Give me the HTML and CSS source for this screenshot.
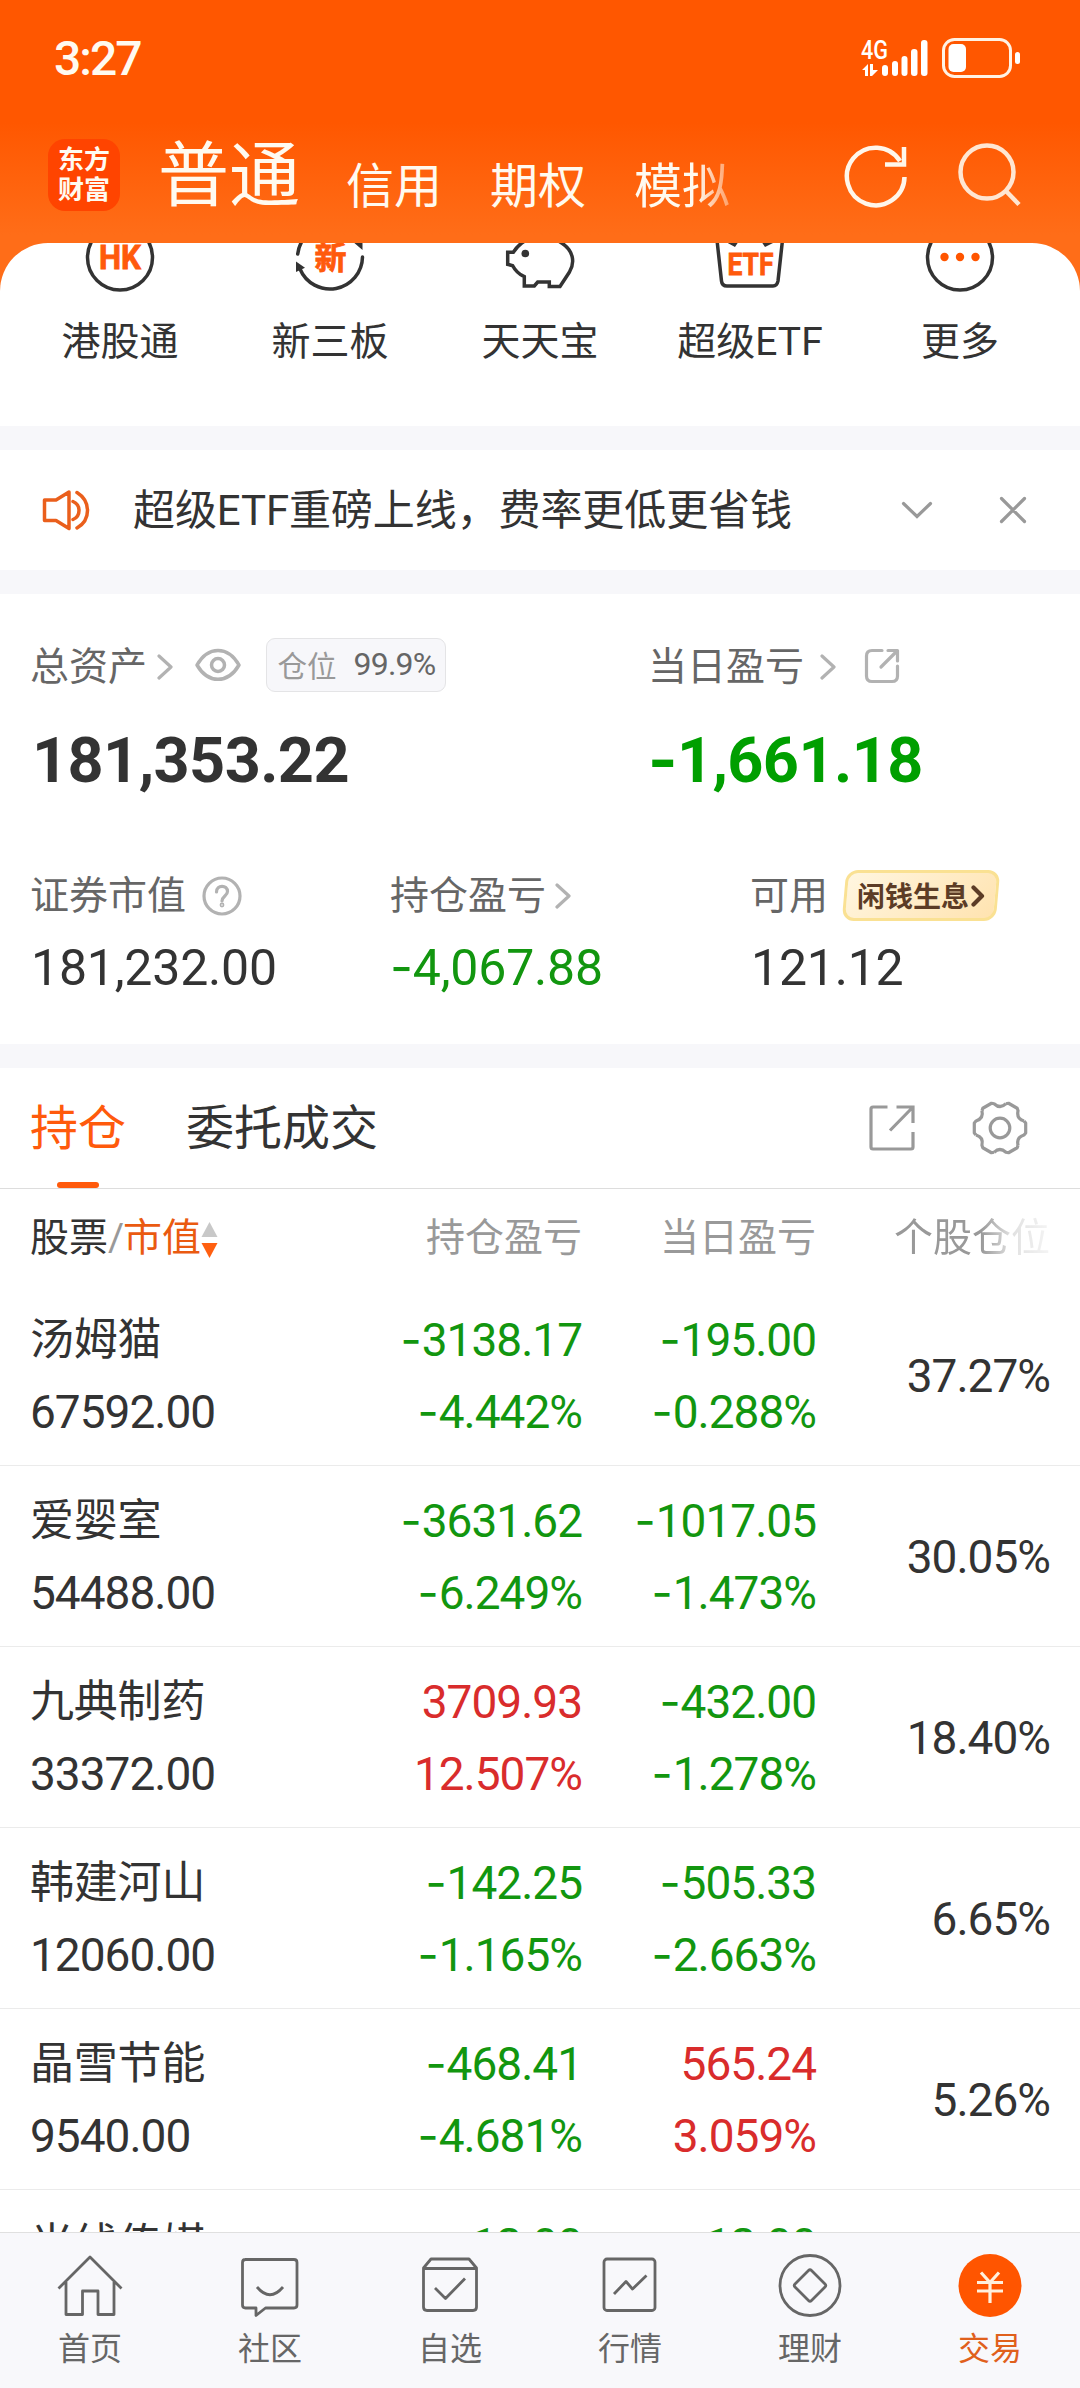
FILE: index.html
```html
<!DOCTYPE html>
<html lang="zh-CN">
<head>
<meta charset="utf-8">
<title>交易</title>
<link rel="stylesheet" href="styles.css">
</head>
<body>
<div class="app">
  <header class="header">
    <div class="status">
      <span class="clock">3:27</span>
      <svg class="status-icons" width="160" height="44" viewBox="862 35 160 44" fill="#fff">
        <text class="net" x="862" y="57.500" textLength="27" lengthAdjust="spacingAndGlyphs">4G</text>
        <path d="M863 69 L869 63 V75 H866 V69Z M871 63 H874 V69 H879 L873 75 H871Z"/>
        <rect x="883" y="64" width="6" height="11" rx="3"/><rect x="893" y="60" width="6" height="15" rx="3"/>
        <rect x="902.500" y="55" width="6" height="20" rx="3"/><rect x="912" y="48" width="6.500" height="27" rx="3"/>
        <rect x="922" y="39" width="6.500" height="36" rx="3"/>
        <rect x="944.500" y="38.500" width="67" height="37" rx="11" fill="none" stroke="#fff2e4" stroke-width="3"/>
        <rect x="949.500" y="43" width="17.500" height="28" rx="5"/><rect x="1016" y="51" width="5" height="12" rx="2.500"/>
      </svg>
    </div>
    <div class="topbar">
      <div class="logo"><span>东方</span><span>财富</span></div>
      <nav class="accounts">
        <span class="account account-on">普通</span><span class="account">信用</span><span class="account">期权</span><span class="account account-fade">模拟</span>
      </nav>
      <svg class="top-icons" width="180" height="72" viewBox="843 139 180 72" fill="none" stroke-width="4.500">
        <path stroke="#fff6ea" d="M904.500 177 A28.800 28.800 0 1 1 900 161"/>
        <path stroke="#fff6ea" d="M904 147 V164.500 H885"/>
        <g stroke="#ffe6d2"><circle cx="987" cy="172" r="26.500"/><path d="M1005.500 190.500 L1019 204.500"/></g>
      </svg>
    </div>
  </header>

  <section class="shortcuts-wrap">
    <div class="shortcuts">
      <div class="shortcut">
        <svg width="70" height="70" viewBox="0 0 70 70"><circle class="ink" cx="35" cy="34.500" r="32.500"/><text class="ico-text" x="35" y="46" font-size="33" textLength="42" lengthAdjust="spacingAndGlyphs">HK</text></svg>
        <span>港股通</span>
      </div>
      <div class="shortcut">
        <svg width="70" height="70" viewBox="0 0 70 70"><path class="ink" d="M2.700 31 A32.500 32.500 0 0 1 60 14 M67.500 34 A32.500 32.500 0 0 1 5 46"/><path fill="#333" d="M1 38.500 L10 44.700 L1 49Z M67.500 12 V27 L57 18Z"/><text class="ico-text" x="35.500" y="45.500" font-size="32">新</text></svg>
        <span>新三板</span>
      </div>
      <div class="shortcut">
        <svg width="70" height="70" viewBox="0 0 70 70"><path class="ink pig" d="M16.700 20 Q12 23.500 8.300 29.300 H2.700 V41.300 L7.700 42.700 Q11.500 50 19.300 53.700 V63 H29.300 L32.700 59 H44.300 V63.500 H55 L64.300 49.300 C70 40 69 28 56.700 20 C45 12 28 12 16.700 20Z"/><circle cx="20.300" cy="30.500" r="3.800" fill="#333"/></svg>
        <span>天天宝</span>
      </div>
      <div class="shortcut">
        <svg width="70" height="70" viewBox="0 0 70 70"><path class="ink" d="M1 8 L6.500 58 Q7 63 12 63 H58 Q62 63 63 58 L68.500 8"/><path fill="#333" d="M9 18 H24 L20 24Z M46 18 H62 L50 24Z"/><text class="ico-text" x="35.500" y="52" font-size="32" textLength="46" lengthAdjust="spacingAndGlyphs">ETF</text></svg>
        <span>超级ETF</span>
      </div>
      <div class="shortcut">
        <svg width="70" height="70" viewBox="0 0 70 70"><circle class="ink" cx="35" cy="34.500" r="32.500"/><g fill="#ff5500"><circle cx="19.500" cy="34" r="4.200"/><circle cx="35" cy="34" r="4.200"/><circle cx="50.500" cy="34" r="4.200"/></g></svg>
        <span>更多</span>
      </div>
    </div>
  </section>

  <section class="notice">
    <svg width="48" height="44" viewBox="42 488 48 44" fill="none" stroke="#ea5f1c" stroke-width="3.500" stroke-linecap="round" stroke-linejoin="round"><path d="M69 492 L56 500 H44.500 V520.500 H56 L69 528.500Z M73 501.500 Q79 504 79 510.500 Q79 517 73 519.500 M77 492.500 Q87.500 499 87.500 510.500 Q87.500 522 77 528"/></svg>
    <p class="notice-text">超级ETF重磅上线，费率更低更省钱</p>
    <svg width="126" height="30" viewBox="902 495 126 30" fill="none" stroke="#999" stroke-width="3.200" stroke-linecap="round"><path d="M904.500 503.500 L918 516.500 L931.500 503.500 M1002.500 498.500 L1025.500 521.500 M1025.500 498.500 L1002.500 521.500"/></svg>
  </section>

  <section class="assets">
    <div class="asset asset-total">
      <div class="label"><span>总资产</span>
        <svg class="arrow" width="16" height="28" viewBox="0 0 16 28"><path d="M2 3 L14 14 L2 25"/></svg>
        <svg class="eye" width="46" height="34" viewBox="0 0 46 34"><path d="M2 17 C13 -2.500 33 -2.500 44 17 C33 36 13 36 2 17Z"/><circle cx="23" cy="17" r="6.500"/></svg>
        <span class="ratio"><i>仓位</i><b>99.9%</b></span>
      </div>
      <div class="big">181,353.22</div>
    </div>
    <div class="asset asset-today">
      <div class="label"><span>当日盈亏</span>
        <svg class="arrow arrow-wide" width="16" height="28" viewBox="0 0 16 28"><path d="M2 3 L14 14 L2 25"/></svg>
        <svg class="share" width="36" height="36" viewBox="0 0 36 36"><path d="M18 2.500 H8 Q2.500 2.500 2.500 8 V28 Q2.500 33.500 8 33.500 H28 Q33.500 33.500 33.500 28 V18 M24 2.500 H33.500 V13 M33 3 L17 19"/></svg>
      </div>
      <div class="big down"><span class="sign">-</span>1,661.18</div>
    </div>
    <div class="asset">
      <div class="label"><span>证券市值</span>
        <svg class="help" width="40" height="40" viewBox="0 0 40 40"><circle cx="20" cy="20" r="18"/><path d="M14.500 16 C14.500 8.500 25.500 8.500 25.500 15.500 C25.500 20 20 20 20 25"/><circle cx="20" cy="29" r="0.800"/></svg>
      </div>
      <div class="value">181,232.00</div>
    </div>
    <div class="asset">
      <div class="label"><span>持仓盈亏</span>
        <svg class="arrow arrow-near" width="16" height="28" viewBox="0 0 16 28"><path d="M2 3 L14 14 L2 25"/></svg>
      </div>
      <div class="value down"><span class="sign">-</span>4,067.88</div>
    </div>
    <div class="asset">
      <div class="label"><span>可用</span>
        <span class="promo"><em>闲钱生息</em><svg width="14" height="22" viewBox="0 0 14 22"><path d="M2.500 2.500 L11 11 L2.500 19.500"/></svg></span>
      </div>
      <div class="value">121.12</div>
    </div>
  </section>

  <section class="holdings">
    <div class="tabs">
      <span class="tab tab-on">持仓</span><span class="tab">委托成交</span>
      <svg class="tab-icons" width="160" height="56" viewBox="870 1100 160 56" fill="none" stroke="#999" stroke-width="3.200">
        <path d="M889.500 1107 H875 Q873 1107 873 1109 V1147 Q873 1149 875 1149 H913 Q915 1149 915 1147 V1132 M898.500 1107 H915 V1123 M915 1107 L892 1130.500"/>
        <g transform="translate(1002 1128)"><circle r="9.800"/>
          <g id="gear" stroke-linejoin="round"><path id="tooth" d="M24 -7 L25.700 -5 V5 L24 7 Q16 9.500 18.100 17.300"/><use href="#tooth" transform="rotate(60)"/><use href="#tooth" transform="rotate(120)"/><use href="#tooth" transform="rotate(180)"/><use href="#tooth" transform="rotate(240)"/><use href="#tooth" transform="rotate(300)"/></g>
        </g>
      </svg>
    </div>
    <div class="row head">
      <div class="sort">股票<i>/</i><b>市值</b><svg width="17" height="36" viewBox="0 0 17 36"><path fill="#c8c8c8" d="M8.500 0 L16.500 15 H0.500Z"/><path fill="#ff5f10" d="M8.500 36 L16.500 21 H0.500Z"/></svg></div>
      <div>持仓盈亏</div><div>当日盈亏</div><div class="head-fade">个股仓位</div>
    </div>
    <div class="row">
      <div class="stock"><span>汤姆猫</span><span>67592.00</span></div>
      <div class="down"><span><span class="sign">-</span>3138.17</span><span><span class="sign">-</span>4.442%</span></div>
      <div class="down"><span><span class="sign">-</span>195.00</span><span><span class="sign">-</span>0.288%</span></div>
      <div>37.27%</div>
    </div>
    <div class="row">
      <div class="stock"><span>爱婴室</span><span>54488.00</span></div>
      <div class="down"><span><span class="sign">-</span>3631.62</span><span><span class="sign">-</span>6.249%</span></div>
      <div class="down"><span><span class="sign">-</span>1017.05</span><span><span class="sign">-</span>1.473%</span></div>
      <div>30.05%</div>
    </div>
    <div class="row">
      <div class="stock"><span>九典制药</span><span>33372.00</span></div>
      <div class="up"><span>3709.93</span><span>12.507%</span></div>
      <div class="down"><span><span class="sign">-</span>432.00</span><span><span class="sign">-</span>1.278%</span></div>
      <div>18.40%</div>
    </div>
    <div class="row">
      <div class="stock"><span>韩建河山</span><span>12060.00</span></div>
      <div class="down"><span><span class="sign">-</span>142.25</span><span><span class="sign">-</span>1.165%</span></div>
      <div class="down"><span><span class="sign">-</span>505.33</span><span><span class="sign">-</span>2.663%</span></div>
      <div>6.65%</div>
    </div>
    <div class="row">
      <div class="stock"><span>晶雪节能</span><span>9540.00</span></div>
      <div class="down"><span><span class="sign">-</span>468.41</span><span><span class="sign">-</span>4.681%</span></div>
      <div class="up"><span>565.24</span><span>3.059%</span></div>
      <div>5.26%</div>
    </div>
    <div class="row">
      <div class="stock"><span>光线传媒</span></div>
      <div class="down"><span><span class="sign">-</span>12.00</span></div>
      <div class="down"><span><span class="sign">-</span>12.00</span></div>
      <div></div>
    </div>
  </section>

  <nav class="tabbar">
    <div class="nav-item"><svg width="68" height="68" viewBox="0 0 68 68"><path d="M2.500 34.500 L34 3 L65.500 34.500 M10 28 V60.500 H26.500 V37 H42 V60.500 H58 V28"/></svg><span>首页</span></div>
    <div class="nav-item"><svg width="68" height="68" viewBox="0 0 68 68"><path d="M9 5.500 H58 Q61 5.500 61 8.500 V51 Q61 54 58 54 H29.500 L20 61.500 V54 H9.500 Q6.500 54 6.500 51 V8.500 Q6.500 5.500 9.500 5.500 M21 33 Q34 48.500 47 33"/></svg><span>社区</span></div>
    <div class="nav-item"><svg width="68" height="68" viewBox="0 0 68 68"><path d="M7.500 14 L15 5 H53 L60.500 14 V53 Q60.500 56.500 57 56.500 H11 Q7.500 56.500 7.500 53Z M7.500 14.500 H60.500 M19 34 L29.500 44.500 L49 24.500"/></svg><span>自选</span></div>
    <div class="nav-item"><svg width="68" height="68" viewBox="0 0 68 68"><rect x="8" y="5" width="51" height="51.500" rx="3"/><path d="M18 40 L30 27.500 L36.500 35 L50.500 21.500"/></svg><span>行情</span></div>
    <div class="nav-item"><svg width="68" height="68" viewBox="0 0 68 68"><circle cx="34" cy="31.500" r="30"/><path d="M32.500 16.500 Q34 15 35.500 16.500 L49 30 Q50.500 31.500 49 33 L35.500 46.500 Q34 48 32.500 46.500 L19 33 Q17.500 31.500 19 30Z"/></svg><span>理财</span></div>
    <div class="nav-item nav-on"><svg width="68" height="68" viewBox="0 0 68 68"><circle class="coin" cx="34" cy="31.500" r="31.500"/><path class="yen" d="M25 18.500 L34 28.500 L43 18.500 M34 28 V49 M21 28.500 H47 M21 37 H47"/></svg><span>交易</span></div>
  </nav>
</div>
</body>
</html>
```

FILE: styles.css
```css
* { box-sizing: border-box; }
body { margin: 0; font-family: Roboto, "Noto Sans CJK SC", sans-serif; color: #333; background: #fff; }
svg { display: block; flex: none; }
i, em { font-style: normal; }
b { font-weight: 400; }

.app { width: 1080px; height: 2388px; display: flex; flex-direction: column; overflow: hidden; background: #fff; }

/* Header */
.header { flex: none; height: 243px; background: linear-gradient(#ff5700 0, #ff5700 122px, #ff6d18 235px); color: #fffaf0; }
.status { height: 116px; padding: 0 59px 0 54px; display: flex; align-items: center; justify-content: space-between; }
.clock { font-size: 48px; font-weight: 500; letter-spacing: -2px; }
.net { font-size: 25px; font-weight: 500; }
.topbar { display: flex; align-items: flex-start; padding: 23px 57px 0 48px; }
.logo { width: 72px; height: 72px; border-radius: 17px; background: #ff4400; display: flex; flex-direction: column; align-items: center; justify-content: center; font-size: 26px; font-weight: 700; line-height: 30px; }
.accounts { flex: 1; display: flex; align-items: flex-start; gap: 48px; margin-left: 38px; line-height: 72px; }
.account { font-size: 48px; white-space: nowrap; padding-top: 12px; }
.account-on { font-size: 71px; margin-right: -2px; padding-top: 1px; }
.account-fade { width: 102px; -webkit-mask-image: linear-gradient(90deg, #000 62px, rgba(0,0,0,.4) 95px); mask-image: linear-gradient(90deg, #000 62px, rgba(0,0,0,.4) 95px); }

/* Shortcuts */
.shortcuts-wrap { flex: none; background: #ff6d18; }
.shortcuts { height: 183px; padding: 0 15px; display: flex; background: #fff; border-radius: 48px 48px 0 0; overflow: hidden; }
.shortcut { width: 210px; display: flex; flex-direction: column; align-items: center; margin-top: -20px; font-size: 39px; line-height: 50px; gap: 24px; }
.ink { fill: none; stroke: #333; stroke-width: 3.500; stroke-linejoin: round; stroke-linecap: round; }
.pig { stroke-linejoin: miter; }
.ico-text { fill: #ff5a0c; font-weight: 700; text-anchor: middle; stroke: #ff5a0c; stroke-width: 0.800; }

/* Notice */
.notice { flex: none; height: 168px; border-top: 24px solid #f7f7fa; border-bottom: 24px solid #f7f7fa; padding: 0 53px 0 42px; display: flex; align-items: center; }
.notice-text { flex: 1; margin: 1px 0 0 43px; font-size: 42px; line-height: 60px; letter-spacing: -0.100px; }

/* Assets */
.assets { flex: none; height: 474px; padding: 39px 30px 0; border-bottom: 24px solid #f7f7fa; display: grid; grid-template-columns: repeat(6, 180px); grid-template-rows: 229px auto; }
.asset { grid-column: span 2; }
.asset-total { grid-column: 1 / 4; }
.asset-today { grid-column: 4 / 7; padding-left: 78px; }
.label { height: 64px; display: flex; align-items: center; font-size: 39px; color: #666; white-space: nowrap; }
.label > span:first-child { margin-top: -4px; }
.label svg { fill: none; stroke: #b2b2b2; stroke-width: 3.200; stroke-linecap: round; stroke-linejoin: round; }
.arrow { margin: 4px 0 0 10px; }
.arrow-wide { margin-left: 16px; }
.arrow-near { margin-left: 9px; }
.label .eye { stroke-width: 3.500; margin-left: 22px; }
.label .share { margin: 2px 0 0 28px; }
.label .help { margin: 3px 0 0 16px; }
.ratio { margin-left: 25px; width: 180px; height: 54px; border: 1px solid #e4e4e6; border-radius: 9px; background: #f7f7fa; display: flex; align-items: center; justify-content: center; gap: 17px; font-size: 29.500px; color: #999; padding: 0 0 2px 1px; }
.ratio b { font-size: 32px; color: #666; letter-spacing: -0.800px; }
.big { margin-top: 27px; font-size: 63px; line-height: 74px; font-weight: 700; letter-spacing: -0.600px; padding-left: 2px; }
.value { margin-top: 10px; font-size: 50px; line-height: 64px; padding-left: 1px; letter-spacing: -0.200px; }
.big.down { color: #009f00; padding-left: 0; }
.value.down { padding-left: 0; }
.down { color: #12960f; }
.up { color: #d92c2c; }
.sign { font-family: Inter, sans-serif; line-height: 0; }
.promo { position: relative; z-index: 0; width: 158px; height: 51px; margin: 3px 0 0 14px; padding-left: 15px; display: flex; align-items: center; gap: 2px; color: #5c3c26; font-size: 28px; font-weight: 700; }
.promo em { margin-top: -2px; }
.promo::before { content: ""; position: absolute; z-index: -1; inset: 0 2px; transform: skewX(-5deg); border: 3px solid #fae193; border-radius: 12px; background: linear-gradient(135deg, #fff6e0, #ffe3b0); }
.label .promo svg { stroke: #5c3c26; stroke-width: 4.200; }

/* Holdings */
.holdings { flex: 1; min-height: 0; overflow: hidden; }
.tabs { height: 121px; padding: 0 52px 0 30px; border-bottom: 1px solid #ddd; display: flex; align-items: center; gap: 60px; font-size: 48px; }
.tab { height: 120px; line-height: 122px; }
.tab-on { color: #ff5a0c; position: relative; }
.tab-on::after { content: ""; position: absolute; left: 27px; bottom: 0; width: 42px; height: 6px; border-radius: 3px; background: #ff5a0c; }
.tab-icons { margin-left: auto; }
.row { height: 181px; padding: 2px 30px 0; border-bottom: 1px solid #ebebeb; display: grid; grid-template-columns: 270px 282px 234px 234px; align-items: center; text-align: right; font-size: 46px; letter-spacing: -1px; line-height: 72px; }
.row > div > span { display: block; }
.row .stock { text-align: left; }
.stock > span:first-child { font-size: 44px; letter-spacing: -0.200px; }
.row .sign { margin-right: 1px; }
.row:last-child { align-items: start; padding-top: 19px; }
.row.head { height: 96px; border: 0; padding-top: 1px; font-size: 39px; letter-spacing: 0; color: #999; }
.sort { display: flex; align-items: center; color: #333; }
.sort i { color: #999; margin-right: -1px; }
.sort b { color: #ea5a10; }
.sort svg { margin: 4px 0 0 0; }
.head-fade { -webkit-mask-image: linear-gradient(90deg, #000 165px, rgba(0,0,0,.3) 195px, rgba(0,0,0,.1) 234px); mask-image: linear-gradient(90deg, #000 165px, rgba(0,0,0,.3) 195px, rgba(0,0,0,.1) 234px); }

/* Bottom navigation */
.tabbar { flex: none; height: 156px; margin-top: -1px; border-top: 1px solid #e0e0e0; background: #f8f8fb; display: flex; padding-top: 21px; }
.nav-item { width: 180px; display: flex; flex-direction: column; align-items: center; gap: 7px; font-size: 32px; line-height: 40px; color: #666; }
.nav-item svg { fill: none; stroke: #666; stroke-width: 2.800; stroke-linejoin: round; }
.nav-on { color: #e0601c; }
.nav-item .coin { fill: #ff5500; stroke: none; }
.nav-item .yen { stroke: #fff0dc; stroke-width: 3.200; }
```
